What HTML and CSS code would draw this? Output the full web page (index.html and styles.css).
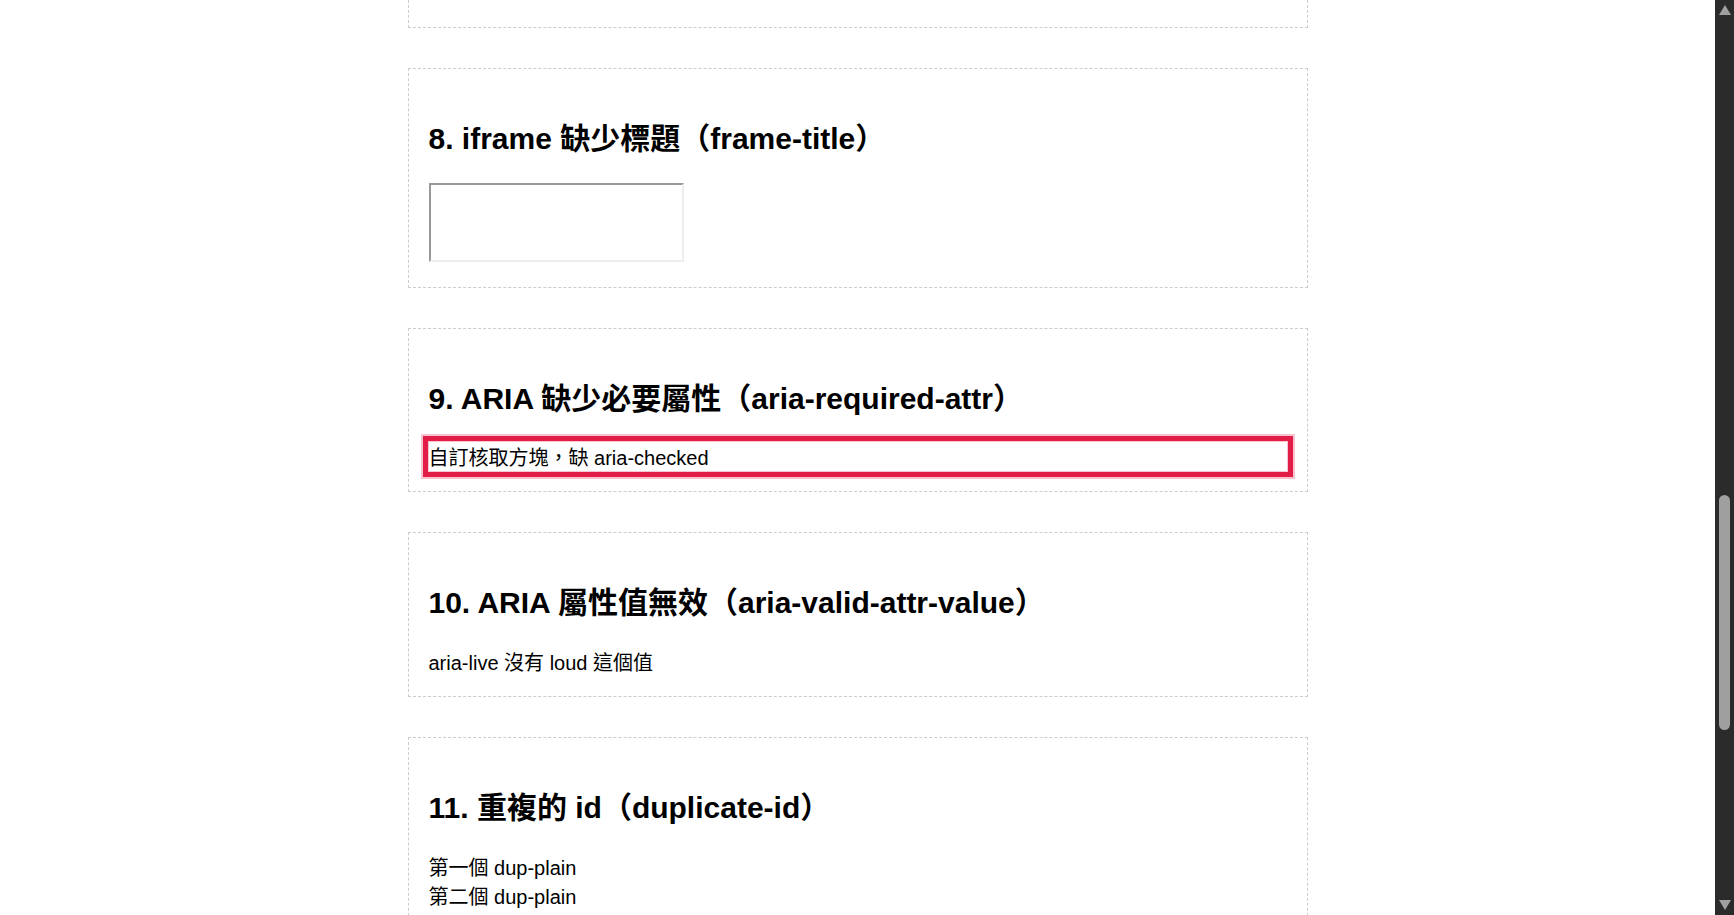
FILE: index.html
```html
<!DOCTYPE html>
<html lang="zh-Hant">
<head>
    <meta charset="UTF-8">
    <meta name="viewport" content="width=device-width, initial-scale=1.0">
    <title>無障礙檢測範例</title>
    <link rel="stylesheet" href="styles.css">
</head>
<body>
    <main class="page">
        <!-- tail of section 7, scrolled mostly out of view -->
        <section class="case cut"></section>

        <section class="case">
            <h2>8. iframe 缺少標題（frame-title）</h2>
            <iframe class="frame"></iframe>
        </section>

        <section class="case">
            <h2>9. ARIA 缺少必要屬性（aria-required-attr）</h2>
            <div class="fake-check flagged" tabindex="0">自訂核取方塊，缺 aria-checked</div>
        </section>

        <section class="case">
            <h2>10. ARIA 屬性值無效（aria-valid-attr-value）</h2>
            <div>aria-live 沒有 loud 這個值</div>
        </section>

        <section class="case">
            <h2>11. 重複的 id（duplicate-id）</h2>
            <div class="dup-plain">第一個 dup-plain</div>
            <div class="dup-plain">第二個 dup-plain</div>
        </section>
    </main>

    <div class="scrollbar" aria-hidden="true">
        <span class="arrow up"></span>
        <span class="thumb"></span>
        <span class="arrow down"></span>
    </div>
</body>
</html>
```

FILE: styles.css
```css
html {
    overflow: hidden;
}
body {
    font-family: "Liberation Sans", Arial, "Noto Sans CJK TC", sans-serif;
    font-size: 20px;
    color: #000;
    background: #fff;
    margin: 0;
    display: grid;
    grid-template-columns: 1fr 19px;
    align-items: start;
}
.page {
    padding: 0 10px 10px;
}
.case {
    max-width: 858px;
    margin: 0 auto 40px;
    padding: 20px;
    border: 1px dashed #ccc;
}
.case.cut {
    border-top: none;
    padding-top: 0;
    height: 7px;
}
.case h2 {
    font-size: 30px;
    margin: 24.85px 0;
}
.frame {
    width: 251px;
    height: 75px;
    border: 2px solid;
    border-color: #999 #eee #eee #999;
}
.flagged {
    outline: 5px solid #e11d48;
    outline-offset: 1px;
    box-shadow: 0 0 0 8px #f8c4d0;
}

/* dark browser scrollbar, page scrolled about half way */
.scrollbar {
    height: 100vh;
    background: #2b2b2b;
    display: flex;
    flex-direction: column;
    align-items: center;
}
.arrow {
    width: 0;
    height: 0;
    border-left: 6.5px solid transparent;
    border-right: 6.5px solid transparent;
}
.arrow.up {
    margin-top: 5px;
    border-bottom: 10px solid #a0a0a0;
}
.arrow.down {
    margin-top: auto;
    margin-bottom: 5px;
    border-top: 10px solid #a0a0a0;
}
.thumb {
    width: 11px;
    height: 235px;
    margin-top: 480px;
    border-radius: 6px;
    background: #9f9f9f;
}
```
